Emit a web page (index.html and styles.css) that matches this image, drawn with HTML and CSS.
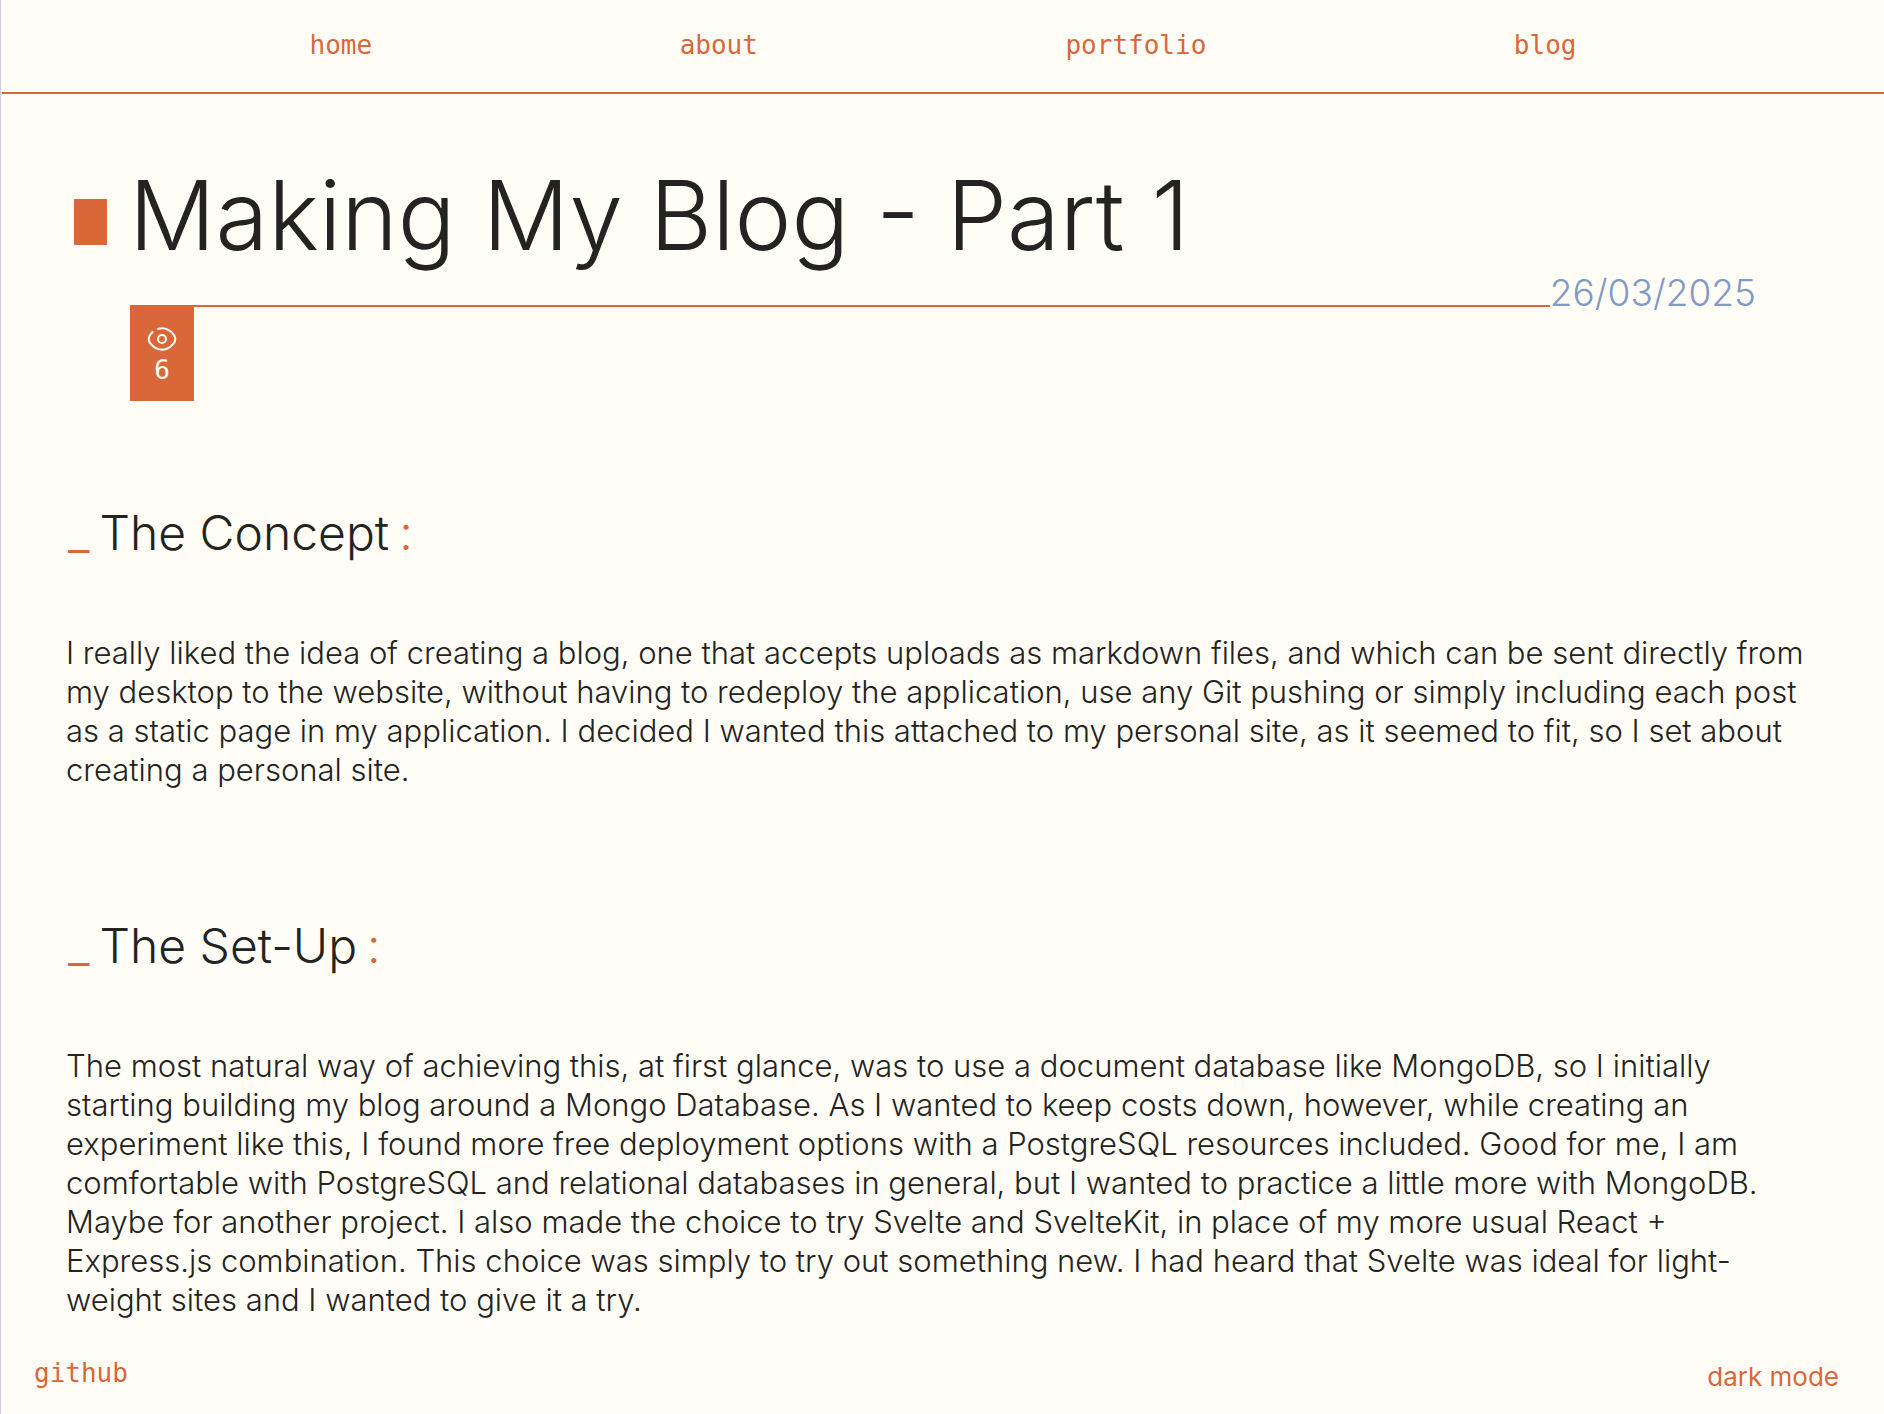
FILE: index.html
```html
<!DOCTYPE html>
<html lang="en">
<head>
<meta charset="utf-8">
<meta name="viewport" content="width=device-width, initial-scale=1">
<title>Making My Blog - Part 1</title>
<link rel="stylesheet" href="styles.css">
</head>
<body>
<div class="page">
  <header class="site-header">
    <nav class="site-nav">
      <a href="#home">home</a>
      <a href="#about">about</a>
      <a href="#portfolio">portfolio</a>
      <a href="#blog">blog</a>
    </nav>
  </header>
  <main class="post">
    <div class="post-head">
      <h1 class="post-title">Making My Blog - Part 1</h1>
      <div class="post-meta">
        <div class="rule"></div>
        <time class="date" datetime="2025-03-26">26/03/2025</time>
      </div>
      <div class="views">
        <svg class="eye" viewBox="0 0 24 24" aria-label="views" role="img">
          <path d="M9 4.46A9.8 9.8 0 0 1 12 4c4.18 0 7.03 2.5 8.73 4.7.85 1.1 1.27 1.66 1.27 3.3 0 1.64-.42 2.2-1.27 3.3C19.03 17.5 16.18 20 12 20s-7.03-2.5-8.73-4.7C2.42 14.2 2 13.64 2 12c0-1.64.42-2.2 1.27-3.3A14.5 14.5 0 0 1 5 6.82"/>
          <circle cx="12" cy="12" r="3"/>
        </svg>
        <span>6</span>
      </div>
    </div>
    <section class="section">
      <h2 class="section-title"><span class="mark">_</span><span>The Concept</span><span class="mark">:</span></h2>
      <p>I really liked the idea of creating a blog, one that accepts uploads as markdown files, and which can be sent directly from my desktop to the website, without having to redeploy the application, use any Git pushing or simply including each post as a static page in my application. I decided I wanted this attached to my personal site, as it seemed to fit, so I set about creating a personal site.</p>
    </section>
    <section class="section">
      <h2 class="section-title"><span class="mark">_</span><span>The Set-Up</span><span class="mark">:</span></h2>
      <p>The most natural way of achieving this, at first glance, was to use a document database like MongoDB, so I initially starting building my blog around a Mongo Database. As I wanted to keep costs down, however, while creating an experiment like this, I found more free deployment options with a PostgreSQL resources included. Good for me, I am comfortable with PostgreSQL and relational databases in general, but I wanted to practice a little more with MongoDB. Maybe for another project. I also made the choice to try Svelte and SvelteKit, in place of my more usual React + Express.js combination. This choice was simply to try out something new. I had heard that Svelte was ideal for light-weight sites and I wanted to give it a try.</p>
    </section>
  </main>
  <footer class="site-footer">
    <a href="#github">github</a>
    <button type="button" class="theme-toggle">dark mode</button>
  </footer>
</div>
</body>
</html>
```
FILE: styles.css
```css
:root {
  --paper: #fffdf5;
  --ink: #232321;
  --accent: #d9673a;
  --date: #7f9ac8;
  --sans: Inter, "Open Sans", sans-serif;
  --mono: "DejaVu Sans Mono", monospace;
}

* { box-sizing: border-box; }

body {
  margin: 0;
  background: var(--paper);
  color: var(--ink);
  font-family: var(--sans);
  font-weight: 300;
}

h1, h2, p { margin: 0; font-weight: 300; }

a {
  color: var(--accent);
  font: 26px/32px var(--mono);
  text-decoration: none;
}

.page {
  min-height: 100vh;
  display: flex;
  flex-direction: column;
  border-left: 1px solid #cfcfdc;
  padding-left: 1px;
}

.site-header {
  height: 94px;
  padding-top: 29px;
  border-bottom: 2px solid var(--accent);
}

.site-nav {
  display: flex;
  justify-content: space-evenly;
}

.post { padding: 0 64px; }

.post-head { padding: 61px 64px 0 64px; }

.post-title {
  display: flex;
  align-items: center;
  margin-left: -56px;
  gap: 22px;
  font-size: 96px;
  line-height: 120px;
}

.post-title::before {
  content: "";
  width: 33px;
  height: 46px;
  margin-top: 14px;
  background: var(--accent);
}

.post-meta {
  display: flex;
  align-items: flex-end;
  margin-top: 4px;
}

.rule {
  flex: 1;
  height: 2px;
  background: var(--accent);
}

.date {
  color: var(--date);
  font-size: 37px;
  line-height: 28px;
}

.views {
  width: 64px;
  height: 94px;
  display: flex;
  flex-direction: column;
  align-items: center;
  padding-top: 16px;
  background: var(--accent);
  color: var(--paper);
  font: 26px/30px var(--mono);
}

.eye {
  width: 32px;
  height: 32px;
  fill: none;
  stroke: currentColor;
  stroke-width: 1.5;
  stroke-linecap: round;
}

.section-title {
  display: flex;
  gap: 10px;
  padding-top: 100px;
  padding-left: 2px;
  font-size: 48px;
  line-height: 64px;
}

.mark { color: var(--accent); }

.section + .section { margin-top: 25px; }

.section p {
  padding-top: 68px;
  font-size: 31px;
  line-height: 39px;
}

.site-footer {
  display: flex;
  align-items: flex-start;
  justify-content: space-between;
  margin-top: auto;
  padding: 0 45px 21px 32px;
}

.theme-toggle {
  margin: 4px 0 0;
  border: 0;
  padding: 0;
  background: none;
  color: var(--accent);
  font: 400 26px/32px var(--sans);
  cursor: pointer;
}
```
